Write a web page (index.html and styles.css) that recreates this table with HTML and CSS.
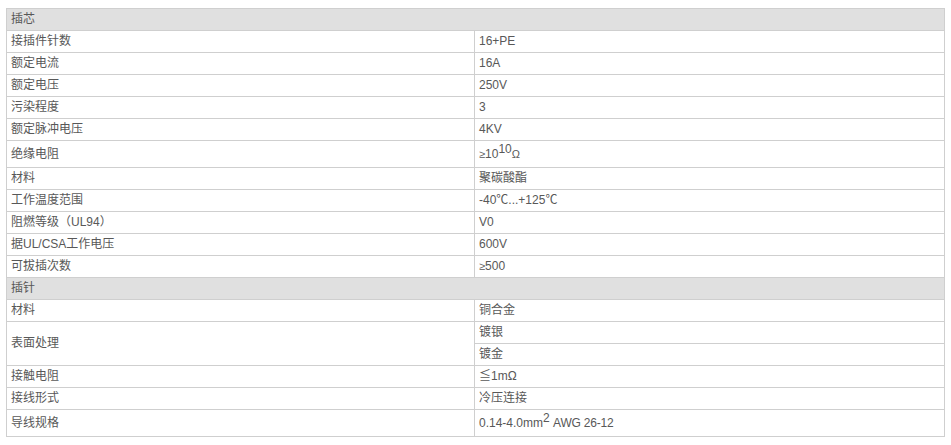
FILE: index.html
```html
<!DOCTYPE html>
<html lang="zh-CN">
<head>
    <meta charset="UTF-8">
    <meta name="viewport" content="width=device-width, initial-scale=1.0">
    <title>插芯参数</title>
    <link rel="stylesheet" href="styles.css">
</head>
<body>
    <table class="spec">
        <tr class="group"><td colspan="2">插芯</td></tr>
        <tr><td class="name">接插件针数</td><td>16+PE</td></tr>
        <tr><td class="name">额定电流</td><td>16A</td></tr>
        <tr><td class="name">额定电压</td><td>250V</td></tr>
        <tr><td class="name">污染程度</td><td>3</td></tr>
        <tr><td class="name">额定脉冲电压</td><td>4KV</td></tr>
        <tr class="tall"><td class="name">绝缘电阻</td><td><span class="sym">≥</span>10<sup>10</sup><span class="sym">Ω</span></td></tr>
        <tr><td class="name">材料</td><td>聚碳酸酯</td></tr>
        <tr><td class="name">工作温度范围</td><td>-40℃...+125℃</td></tr>
        <tr><td class="name">阻燃等级（UL94）</td><td>V0</td></tr>
        <tr><td class="name">据UL/CSA工作电压</td><td>600V</td></tr>
        <tr><td class="name">可拔插次数</td><td><span class="sym">≥</span>500</td></tr>
        <tr class="group"><td colspan="2">插针</td></tr>
        <tr><td class="name">材料</td><td>铜合金</td></tr>
        <tr><td class="name" rowspan="2">表面处理</td><td>镀银</td></tr>
        <tr><td>镀金</td></tr>
        <tr><td class="name">接触电阻</td><td>≦1mΩ</td></tr>
        <tr><td class="name">接线形式</td><td>冷压连接</td></tr>
        <tr class="tall"><td class="name">导线规格</td><td>0.14-4.0mm<sup>2</sup> <span class="awg">AWG 26-12</span></td></tr>
    </table>
</body>
</html>
```

FILE: styles.css
```css
body {
    margin: 8px 6px;
    background-color: #fff;
    font-family: "Liberation Sans", "Noto Sans CJK SC", sans-serif;
    font-size: 12px;
    color: #585858;
}

.spec {
    width: 939px;
    border-collapse: collapse;
    border: 1px solid #cfcfcf;
}

.spec td {
    height: 21px;
    padding: 0 5px 0 4px;
    border: 1px solid #cfcfcf;
    line-height: 21px;
    vertical-align: middle;
    box-sizing: border-box;
}

.spec td.name {
    width: 468px;
}

.group td {
    background-color: #e0e0e0;
}

.tall td {
    height: 27px;
}

.spec sup {
    font-size: 12px;
    line-height: 0;
    vertical-align: 5px;
}

.sym {
    font-size: 11px;
}

.awg {
    letter-spacing: -0.2px;
}
```
